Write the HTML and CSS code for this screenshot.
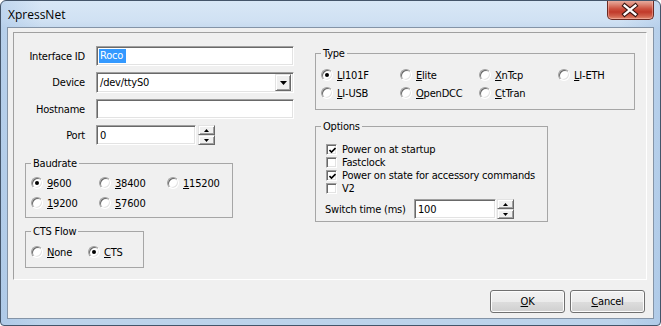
FILE: index.html
```html
<!DOCTYPE html>
<html>
<head>
<meta charset="utf-8">
<title>XpressNet</title>
<link rel="stylesheet" href="styles.css">
</head>
<body>
<div class="window">
  <div class="titlebar">
    <span class="title">XpressNet</span>
    <div class="close">
      <svg width="47" height="20" viewBox="0 0 47 20">
        <path d="M18 5.5 L29 14.5 M29 5.5 L18 14.5" stroke="#3a1712" stroke-width="4.6" stroke-linecap="square" fill="none"/>
        <path d="M18 5.5 L29 14.5 M29 5.5 L18 14.5" stroke="#ffffff" stroke-width="2.4" stroke-linecap="square" fill="none"/>
      </svg>
    </div>
  </div>
  <div class="client">
    <div class="panel">
      <div class="col-left">
        <div class="form">
          <label class="lbl">Interface ID</label>
          <div class="edit"><span class="sel">Roco</span></div>
          <label class="lbl">Device</label>
          <div class="edit combo"><span class="val">/dev/ttyS0</span>
            <span class="raised drop"><svg width="7" height="4" viewBox="0 0 7 4"><polygon points="0,0 7,0 3.5,4" fill="#000"/></svg></span>
          </div>
          <label class="lbl">Hostname</label>
          <div class="edit"></div>
          <label class="lbl">Port</label>
          <div class="spinrow">
            <div class="edit port"><span class="val">0</span></div>
            <div class="spin">
              <span class="raised sb"><svg width="5" height="3" viewBox="0 0 5 3"><polygon points="2.5,0 5,3 0,3" fill="#000"/></svg></span>
              <span class="raised sb"><svg width="5" height="3" viewBox="0 0 5 3"><polygon points="0,0 5,0 2.5,3" fill="#000"/></svg></span>
            </div>
          </div>
        </div>
        <fieldset class="group baud">
          <legend>Baudrate</legend>
          <div class="opts baud-grid">
            <span class="opt"><span class="radio on"></span><span><u>9</u>600</span></span>
            <span class="opt"><span class="radio"></span><span><u>3</u>8400</span></span>
            <span class="opt"><span class="radio"></span><span><u>1</u>15200</span></span>
            <span class="opt"><span class="radio"></span><span><u>1</u>9200</span></span>
            <span class="opt"><span class="radio"></span><span><u>5</u>7600</span></span>
          </div>
        </fieldset>
        <fieldset class="group cts">
          <legend>CTS Flow</legend>
          <div class="opts cts-grid">
            <span class="opt"><span class="radio"></span><span><u>N</u>one</span></span>
            <span class="opt"><span class="radio on"></span><span><u>C</u>TS</span></span>
          </div>
        </fieldset>
      </div>
      <div class="col-right">
        <fieldset class="group type">
          <legend>Type</legend>
          <div class="opts type-grid">
            <span class="opt"><span class="radio on"></span><span><u>L</u>I101F</span></span>
            <span class="opt"><span class="radio"></span><span><u>E</u>lite</span></span>
            <span class="opt"><span class="radio"></span><span><u>X</u>nTcp</span></span>
            <span class="opt"><span class="radio"></span><span><u>L</u>I-ETH</span></span>
            <span class="opt"><span class="radio"></span><span><u>L</u>I-USB</span></span>
            <span class="opt"><span class="radio"></span><span><u>O</u>penDCC</span></span>
            <span class="opt"><span class="radio"></span><span><u>C</u>tTran</span></span>
          </div>
        </fieldset>
        <fieldset class="group options">
          <legend>Options</legend>
          <div class="opts options-body">
            <span class="chkrow"><span class="chk"><svg width="7" height="7" viewBox="0 0 7 7"><path d="M0.5 3 L2.5 5 L6.5 1" stroke="#000" stroke-width="1.6" fill="none"/></svg></span><span>Power on at startup</span></span>
            <span class="chkrow"><span class="chk"></span><span>Fastclock</span></span>
            <span class="chkrow"><span class="chk"><svg width="7" height="7" viewBox="0 0 7 7"><path d="M0.5 3 L2.5 5 L6.5 1" stroke="#000" stroke-width="1.6" fill="none"/></svg></span><span>Power on state for accessory commands</span></span>
            <span class="chkrow"><span class="chk"></span><span>V2</span></span>
            <div class="switchrow">
              <span class="swlbl">Switch time (ms)</span>
              <div class="edit swedit"><span class="val">100</span></div>
              <div class="spin">
                <span class="raised sb"><svg width="5" height="3" viewBox="0 0 5 3"><polygon points="2.5,0 5,3 0,3" fill="#000"/></svg></span>
                <span class="raised sb"><svg width="5" height="3" viewBox="0 0 5 3"><polygon points="0,0 5,0 2.5,3" fill="#000"/></svg></span>
              </div>
            </div>
          </div>
        </fieldset>
      </div>
    </div>
    <div class="buttons">
      <button class="btn"><u>O</u>K</button>
      <button class="btn"><u>C</u>ancel</button>
    </div>
  </div>
</div>
</body>
</html>
```

FILE: styles.css
```css
html, body {
  margin: 0;
  padding: 0;
  background: #ffffff;
}

.window {
  width: 661px;
  height: 326px;
  box-sizing: border-box;
  border: 1px solid #44556a;
  border-radius: 6px 6px 4px 4px;
  padding: 0 6px 6px 6px;
  display: flex;
  flex-direction: column;
  background:
    linear-gradient(to right, rgba(150,185,225,0.35) 0px, rgba(150,185,225,0) 40px, rgba(150,185,225,0) 620px, rgba(150,185,225,0.35) 661px),
    linear-gradient(to bottom, #d8e7f6 0px, #d0e1f3 20px, #c6daef 27px, #bcd3eb 100%);
  font-family: "DejaVu Sans Condensed", "DejaVu Sans", sans-serif;
  font-size: 11px;
  letter-spacing: -0.2px;
  color: #000;
  overflow: hidden;
}

.titlebar {
  height: 26px;
  flex: none;
  display: flex;
  justify-content: space-between;
  align-items: flex-start;
}

.title {
  font-family: "Open Sans", "Noto Sans", sans-serif;
  font-size: 12px;
  letter-spacing: 0;
  line-height: 16px;
  padding: 6px 0 0 1px;
  color: #000;
}

.close {
  width: 47px;
  height: 20px;
  margin-top: -1px;
  box-sizing: border-box;
  border: 1px solid #6b2a22;
  border-top: none;
  border-radius: 0 0 5px 5px;
  background: linear-gradient(to bottom, #ebb5a8 0px, #de8b7a 4px, #cc4f3d 9px, #c13a2a 12px, #d05f4a 16px, #e28b70 19px);
  box-shadow: inset 0 0 0 1px rgba(255,200,190,0.45);
  display: flex;
}
.close svg { display: block; margin-left: -1px; }

.client {
  flex: 1;
  border: 1px solid #8494a7;
  background: #f0f0f0;
  display: flex;
  flex-direction: column;
  padding: 4px 6px 5px 5px;
}

.panel {
  height: 248px;
  flex: none;
  box-sizing: border-box;
  border: 1px solid;
  border-color: #a0a0a0 #ffffff #ffffff #a0a0a0;
  display: flex;
}

.col-left {
  width: 301px;
  flex: none;
  padding-top: 13px;
}

.form {
  display: grid;
  grid-template-columns: 71px 198px;
  grid-template-rows: 20px 21px 20px 20px;
  column-gap: 11px;
  row-gap: 6px;
  align-items: center;
}

.lbl {
  text-align: right;
  white-space: nowrap;
}

.edit {
  box-sizing: border-box;
  height: 20px;
  background: #ffffff;
  border: 1px solid;
  border-color: #a0a0a0 #ffffff #ffffff #a0a0a0;
  box-shadow: inset 1px 1px 0 #696969, inset -1px -1px 0 #e3e3e3;
  padding: 0 0 0 3px;
  display: flex;
  align-items: center;
  line-height: 13px;
}

.sel {
  background: #3399ff;
  color: #ffffff;
  padding: 0 3px 0 1px;
  margin-left: -1px;
  line-height: 14px;
}

.combo {
  height: 21px;
  padding-right: 2px;
  justify-content: space-between;
}

.raised {
  box-sizing: border-box;
  background: #f0f0f0;
  border: 1px solid;
  border-color: #e3e3e3 #696969 #696969 #e3e3e3;
  box-shadow: inset 1px 1px 0 #ffffff, inset -1px -1px 0 #a0a0a0;
  display: flex;
  align-items: center;
  justify-content: center;
}

.drop {
  width: 16px;
  height: 17px;
}

.spinrow {
  display: flex;
  align-items: center;
}

.port {
  width: 100px;
}

.spin {
  display: flex;
  flex-direction: column;
  margin-left: 2px;
}

.sb {
  width: 17px;
  height: 10px;
}

.sb svg, .drop svg { display: block; }

.group {
  margin: 0;
  padding: 0;
  border: 1px solid #a6a6a6;
  box-sizing: border-box;
  min-width: 0;
}

.group legend {
  padding: 0 2px;
  margin-left: 5px;
  line-height: 13px;
}

.opts {
  display: grid;
}

.opt {
  display: flex;
  align-items: center;
  white-space: nowrap;
}

.radio {
  width: 12px;
  height: 12px;
  flex: none;
  box-sizing: border-box;
  border-radius: 50%;
  background: #ffffff;
  border: 1px solid;
  border-color: #a0a0a0 #ffffff #ffffff #a0a0a0;
  box-shadow: inset 1px 1px 0 #696969, inset -1px -1px 0 #e3e3e3;
  margin-right: 4px;
  display: flex;
  align-items: center;
  justify-content: center;
}

.radio.on::after {
  content: "";
  width: 4px;
  height: 4px;
  border-radius: 50%;
  background: #000000;
}

.baud {
  width: 208px;
  margin: 12px 0 0 11px;
}

.baud-grid {
  grid-template-columns: repeat(3, 68px);
  grid-auto-rows: 20px;
  padding: 3px 0 4px 5px;
}

.cts {
  width: 119px;
  margin: 7px 0 0 11px;
}

.cts-grid {
  grid-template-columns: repeat(2, 57px);
  grid-auto-rows: 20px;
  padding: 4px 0 5px 5px;
}

.col-right {
  flex: 1;
  padding-top: 14px;
}

.type {
  width: 320px;
}

.type-grid {
  grid-template-columns: repeat(4, 79px);
  grid-auto-rows: 18px;
  padding: 6px 0 7px 5px;
}

.options {
  width: 233px;
  margin-top: 10px;
}

.options-body {
  display: flex;
  flex-direction: column;
  padding: 10px 0 2px 10px;
}

.chkrow {
  display: flex;
  align-items: center;
  height: 13px;
  white-space: nowrap;
}

.chk {
  width: 11px;
  height: 11px;
  flex: none;
  box-sizing: border-box;
  background: #ffffff;
  border: 1px solid;
  border-color: #a0a0a0 #ffffff #ffffff #a0a0a0;
  box-shadow: inset 1px 1px 0 #696969, inset -1px -1px 0 #e3e3e3;
  margin-right: 5px;
  display: flex;
  align-items: center;
  justify-content: center;
  padding: 1px 0 0 1px;
}

.chk svg { display: block; }

.switchrow {
  display: flex;
  align-items: center;
  margin: 4px 0 0 -1px;
}

.swlbl {
  width: 89px;
  white-space: nowrap;
}

.swedit {
  width: 82px;
}

.switchrow .spin {
  margin-left: 1px;
}

.buttons {
  margin-top: 10px;
  display: flex;
  justify-content: flex-end;
  gap: 5px;
  padding-right: 2px;
}

.btn {
  width: 75px;
  height: 23px;
  box-sizing: border-box;
  border: 1px solid #707070;
  border-radius: 3px;
  background: linear-gradient(to bottom, #f2f2f2 0%, #ebebeb 50%, #dddddd 51%, #cfcfcf 100%);
  box-shadow: inset 0 0 0 1px #fcfcfc;
  font-family: "DejaVu Sans Condensed", "DejaVu Sans", sans-serif;
  font-size: 11px;
  letter-spacing: -0.2px;
  color: #000;
  padding: 0;
}
```
